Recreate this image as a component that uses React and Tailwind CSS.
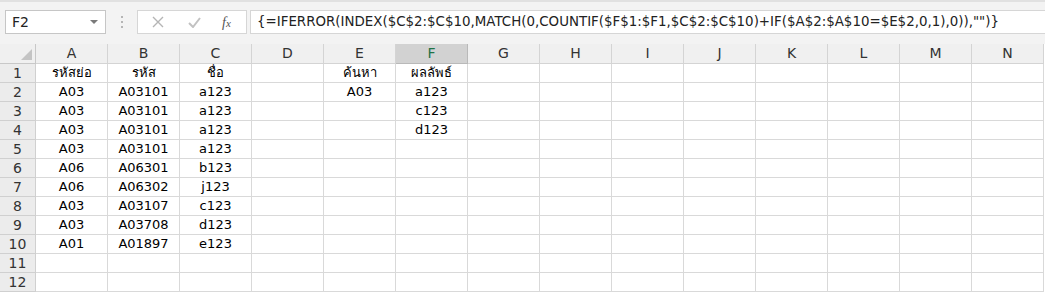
import React from "react";

const cols = ["A","B","C","D","E","F","G","H","I","J","K","L","M","N"];
const data = {
  1: { A: "รหัสย่อ", B: "รหัส", C: "ชื่อ", E: "ค้นหา", F: "ผลลัพธ์" },
  2: { A: "A03", B: "A03101", C: "a123", E: "A03", F: "a123" },
  3: { A: "A03", B: "A03101", C: "a123", F: "c123" },
  4: { A: "A03", B: "A03101", C: "a123", F: "d123" },
  5: { A: "A03", B: "A03101", C: "a123" },
  6: { A: "A06", B: "A06301", C: "b123" },
  7: { A: "A06", B: "A06302", C: "j123" },
  8: { A: "A03", B: "A03107", C: "c123" },
  9: { A: "A03", B: "A03708", C: "d123" },
  10: { A: "A01", B: "A01897", C: "e123" },
  11: {},
  12: {},
};

const font = { fontFamily: '"DejaVu Sans", Tahoma, "Noto Sans", sans-serif' };

export default function App() {
  return (
    <div className="w-[1045px] h-[293px] overflow-hidden bg-white" style={font}>
      {/* formula bar */}
      <div className="h-[44px] bg-[#f3f3f3] border-t-2 border-[#e1e1e1] flex items-center pl-[5px] pb-[2px]">
        <div className="w-[101px] h-[24px] bg-white border border-[#c6c6c6] flex items-center justify-between pl-[6px] pr-[7px] text-[14px] text-[#222]">
          <span>F2</span>
          <svg width="8" height="5" viewBox="0 0 8 5"><path d="M0 0 L8 0 L4 4 Z" fill="#7a7a7a" /></svg>
        </div>
        <div className="w-[31px] flex justify-center">
          <div className="flex flex-col gap-[3px]">
            <span className="w-[2px] h-[2px] bg-[#b5b5b5]" />
            <span className="w-[2px] h-[2px] bg-[#b5b5b5]" />
            <span className="w-[2px] h-[2px] bg-[#b5b5b5]" />
          </div>
        </div>
        <div className="w-[110px] h-[24px] bg-white border border-[#d6d6d6] flex items-center">
          <svg className="ml-[14px]" width="12" height="12" viewBox="0 0 12 12"><path d="M1 1 L11 11 M11 1 L1 11" stroke="#b5b5b5" strokeWidth="1.4" /></svg>
          <svg className="ml-[24px]" width="13" height="11" viewBox="0 0 13 11"><path d="M1 6 L5 10 L12 1" stroke="#c2c2c2" strokeWidth="2" fill="none" /></svg>
          <span className="ml-[21px] text-[14px] italic text-[#555]" style={{ fontFamily: '"Liberation Serif", serif' }}>f<span className="text-[11px]">x</span></span>
        </div>
        <div className="ml-[3px] flex-1 h-[24px] bg-white border border-[#d6d6d6] border-r-0 flex items-center pl-[6px] text-[13.4px] text-[#222] whitespace-nowrap overflow-hidden">
          {'{=IFERROR(INDEX($C$2:$C$10,MATCH(0,COUNTIF($F$1:$F1,$C$2:$C$10)+IF($A$2:$A$10=$E$2,0,1),0)),"")}'}
        </div>
      </div>
      {/* grid */}
      <div className="grid grid-cols-[36px_repeat(14,72px)] grid-rows-[20px_repeat(12,19px)]">
        <div className="bg-[#f0f0f0] border-r border-b border-[#c8c8c8] relative">
          <svg className="absolute right-[3px] bottom-[3px]" width="11" height="11" viewBox="0 0 11 11"><path d="M11 0 L11 11 L0 11 Z" fill="#c4c4c4" /></svg>
        </div>
        {cols.map((c) => (
          <div
            key={c}
            className={
              c === "F"
                ? "bg-[#d2d2d2] border-r border-b border-[#b9b9b9] flex items-center justify-center text-[14px] text-[#217346]"
                : "bg-[#f0f0f0] border-r border-b border-[#d4d4d4] flex items-center justify-center text-[14px] text-[#333]"
            }
          >
            {c}
          </div>
        ))}
        {Object.keys(data).map((r) => (
          <React.Fragment key={r}>
            <div className="bg-[#ececec] border-r border-b border-[#d0d0d0] flex items-center justify-center text-[14px] text-[#333]">
              {r}
            </div>
            {cols.map((c) => (
              <div
                key={c}
                className="border-r border-b border-[#d9d9d9] flex items-center justify-center text-[13px] text-black whitespace-nowrap"
              >
                {data[r][c] || ""}
              </div>
            ))}
          </React.Fragment>
        ))}
      </div>
    </div>
  );
}
